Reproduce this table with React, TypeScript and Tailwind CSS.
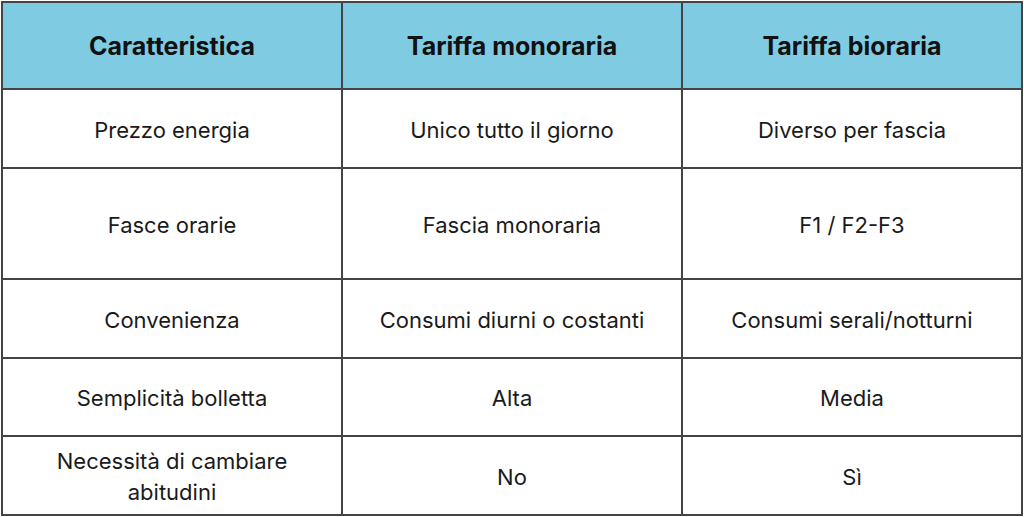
const headers = ['Caratteristica', 'Tariffa monoraria', 'Tariffa bioraria'];

const rows: string[][] = [
  ['Prezzo energia', 'Unico tutto il giorno', 'Diverso per fascia'],
  ['Fasce orarie', 'Fascia monoraria', 'F1 / F2-F3'],
  ['Convenienza', 'Consumi diurni o costanti', 'Consumi serali/notturni'],
  ['Semplicità bolletta', 'Alta', 'Media'],
  ['Necessità di cambiare abitudini', 'No', 'Sì'],
];

export default function App() {
  return (
    <div className="w-[1024px] h-[517px] bg-white pt-px pl-px" style={{ fontFamily: 'Inter, sans-serif' }}>
      <div className="grid w-[1022px] grid-cols-[338px_338px_338px] grid-rows-[85px_77px_109px_77px_76px_77px] gap-[2px] bg-[#444] p-[2px]">
        {headers.map((h) => (
          <div key={h} className="flex items-center justify-center bg-[#7ecbe2] pt-[2px] text-[25px] font-bold text-[#111]">
            {h}
          </div>
        ))}
        {rows.map((row) =>
          row.map((cell, i) => (
            <div
              key={row[0] + i}
              className="flex items-center justify-center bg-white px-3 pt-[3px] text-center text-[22px] leading-[31px] text-[#1a1a1a]"
            >
              {cell}
            </div>
          ))
        )}
      </div>
    </div>
  );
}
